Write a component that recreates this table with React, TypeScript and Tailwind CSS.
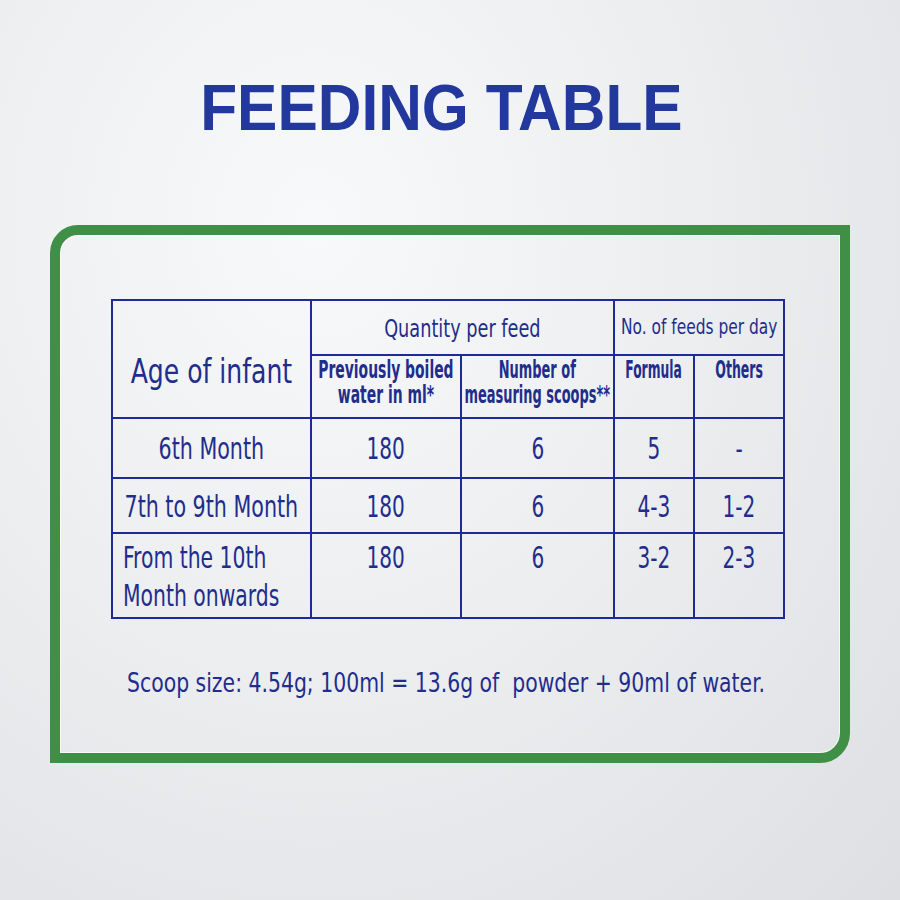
const narrow = "font-['DejaVu_Sans_Condensed','DejaVu_Sans',sans-serif] font-stretch-condensed"

const rows = [
  { age: ["6th Month"], water: "180", scoops: "6", formula: "5", others: "-", h: "h-[60px]", pt: "pt-[14px]", left: false },
  { age: ["7th to 9th Month"], water: "180", scoops: "6", formula: "4-3", others: "1-2", h: "h-[55px]", pt: "pt-[12px]", left: false },
  { age: ["From the 10th", "Month onwards"], water: "180", scoops: "6", formula: "3-2", others: "2-3", h: "h-[85px]", pt: "pt-[4px]", left: true },
]

// squeezes a line so it reads like the narrow print face
function Line({ children, s, left }: { children: React.ReactNode; s: string; left?: boolean }) {
  return (
    <span className={`inline-block whitespace-pre ${s} ${left ? "origin-left" : "origin-center"}`}>{children}</span>
  )
}

export default function App() {
  const cell = "border-2 border-[#1c2b97] p-0 align-top"
  const head = "flex flex-col items-center"
  const sub = "font-bold text-[24px] leading-[25px] text-center"

  return (
    <div className={`w-[900px] h-[900px] overflow-hidden bg-[radial-gradient(ellipse_at_35%_25%,#f8f9fa_0%,#eceef0_45%,#dddfe2_100%)] text-[#1f2d8c] ${narrow}`}>
      {/* title */}
      <div className="pt-[75px] pr-[18px] flex justify-center">
        <h1 className="font-['Liberation_Sans',sans-serif] font-bold text-[65px] leading-none text-[#22389c] scale-x-[0.93] whitespace-nowrap">
          FEEDING TABLE
        </h1>
      </div>

      {/* green frame */}
      <div className="mt-[85px] ml-[50px] w-[800px] h-[538px] border-[10px] border-[#3f8f46] rounded-tl-[28px] rounded-br-[30px] shadow-[inset_0_0_0_1px_rgba(255,255,255,0.7)] pl-[51px] pt-[64px]">
        <table className="border-collapse table-fixed w-[672px]">
          <colgroup>
            <col className="w-[199px]" />
            <col className="w-[150px]" />
            <col className="w-[153px]" />
            <col className="w-[80px]" />
            <col className="w-[90px]" />
          </colgroup>
          <thead>
            <tr className="h-[55px]">
              <td rowSpan={2} className={`${cell} pt-[53px]`}>
                <div className={head}>
                  <Line s="scale-x-[0.82] text-[34px] leading-none">Age of infant</Line>
                </div>
              </td>
              <td colSpan={2} className={`${cell} pt-[16px]`}>
                <div className={head}>
                  <Line s="scale-x-[0.82] text-[24px] leading-none">Quantity per feed</Line>
                </div>
              </td>
              <td colSpan={2} className={`${cell} pt-[15px]`}>
                <div className={head}>
                  <Line s="scale-x-[0.78] text-[22px] leading-none">No. of feeds per day</Line>
                </div>
              </td>
            </tr>
            <tr className="h-[63px]">
              <td className={`${cell} pt-[2px]`}>
                <div className={head}>
                  <Line s={`scale-x-[0.645] ${sub}`}>{"Previously boiled\nwater in ml*"}</Line>
                </div>
              </td>
              <td className={`${cell} pt-[2px]`}>
                <div className={head}>
                  <Line s={`scale-x-[0.6] ${sub}`}>{"Number of\nmeasuring scoops**"}</Line>
                </div>
              </td>
              <td className={`${cell} pt-[2px]`}>
                <div className={head}>
                  <Line s={`scale-x-[0.57] ${sub}`}>Formula</Line>
                </div>
              </td>
              <td className={`${cell} pt-[2px]`}>
                <div className={head}>
                  <Line s={`scale-x-[0.58] ${sub}`}>Others</Line>
                </div>
              </td>
            </tr>
          </thead>
          <tbody className="text-[31px] leading-[38px]">
            {rows.map((r, i) => (
              <tr key={i} className={r.h}>
                <td className={`${cell} ${r.pt}`}>
                  {r.left ? (
                    <div className="flex flex-col items-start pl-[10px]">
                      <Line left s="scale-x-[0.73]">{r.age.join("\n")}</Line>
                    </div>
                  ) : (
                    <div className={head}>
                      <Line s="scale-x-[0.74] leading-none">{r.age[0]}</Line>
                    </div>
                  )}
                </td>
                {[r.water, r.scoops, r.formula, r.others].map((v, j) => (
                  <td key={j} className={`${cell} ${r.pt}`}>
                    <div className={head}>
                      <Line s={`scale-x-[0.72] ${r.left ? "" : "leading-none"}`}>{v}</Line>
                    </div>
                  </td>
                ))}
              </tr>
            ))}
          </tbody>
        </table>

        <p className="mt-[50px] ml-[16px] text-[27px] leading-none">
          <Line left s="scale-x-[0.84]">Scoop size: 4.54g; 100ml = 13.6g of  powder + 90ml of water.</Line>
        </p>
      </div>
    </div>
  )
}
